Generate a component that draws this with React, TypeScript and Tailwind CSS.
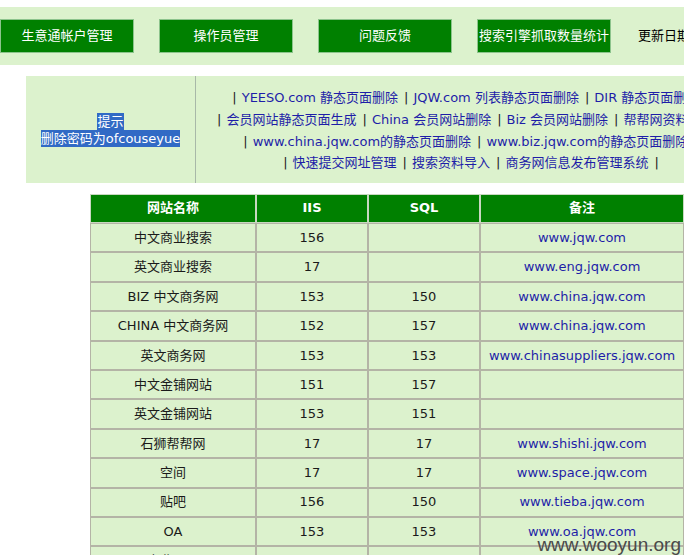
import React from "react";

const font = "font-['DejaVu_Sans','Noto_Sans_CJK_SC',sans-serif]";

type Row = { name: string; iis: string; sql: string; note: string };

const rows: Row[] = [
  { name: "中文商业搜索", iis: "156", sql: "", note: "www.jqw.com" },
  { name: "英文商业搜索", iis: "17", sql: "", note: "www.eng.jqw.com" },
  { name: "BIZ 中文商务网", iis: "153", sql: "150", note: "www.china.jqw.com" },
  { name: "CHINA 中文商务网", iis: "152", sql: "157", note: "www.china.jqw.com" },
  { name: "英文商务网", iis: "153", sql: "153", note: "www.chinasuppliers.jqw.com" },
  { name: "中文金铺网站", iis: "151", sql: "157", note: "" },
  { name: "英文金铺网站", iis: "153", sql: "151", note: "" },
  { name: "石狮帮帮网", iis: "17", sql: "17", note: "www.shishi.jqw.com" },
  { name: "空间", iis: "17", sql: "17", note: "www.space.jqw.com" },
  { name: "贴吧", iis: "156", sql: "150", note: "www.tieba.jqw.com" },
  { name: "OA", iis: "153", sql: "153", note: "www.oa.jqw.com" },
  { name: "商业目录", iis: "", sql: "", note: "" },
];

const links: string[][] = [
  ["YEESO.com 静态页面删除", "JQW.com 列表静态页面删除", "DIR 静态页面删除"],
  ["会员网站静态页面生成", "China 会员网站删除", "Biz 会员网站删除", "帮帮网资料删除"],
  ["www.china.jqw.com的静态页面删除", "www.biz.jqw.com的静态页面删除"],
  ["快速提交网址管理", "搜索资料导入", "商务网信息发布管理系统"],
];

const navButtons = ["生意通帐户管理", "操作员管理", "问题反馈", "搜索引擎抓取数量统计"];

function LinkLine({ items }: { items: string[] }) {
  return (
    <div className="whitespace-nowrap leading-[21.7px]">
      {items.map((t, i) => (
        <span key={i}>
          <span className="text-[#222] pr-[5px]">|</span>
          <a className="text-[#1e1ea8]">{t}</a>
          <span className="pr-[6px]" />
        </span>
      ))}
      <span className="text-[#222]">|</span>
    </div>
  );
}

export default function App() {
  return (
    <div className={`relative w-[684px] h-[555px] overflow-hidden bg-white text-[13px] ${font}`}>
      {/* top nav band */}
      <div className="mt-[7px] h-[58px] bg-[#dcf2cd] flex items-center gap-[25px] whitespace-nowrap">
        {navButtons.map((b) => (
          <div
            key={b}
            className="shrink-0 w-[134px] h-[34px] bg-[#008000] border border-[#8cc48c] text-white flex items-center justify-center"
          >
            {b}
          </div>
        ))}
        <div className="shrink-0 ml-[2px] text-black">更新日期：2010-10-20</div>
      </div>

      {/* hint + links */}
      <div className="mt-[11px] ml-[26px] h-[107px] w-[760px] bg-[#dcf2cd] flex">
        <div className="w-[169px] shrink-0 flex flex-col items-center justify-center leading-[17px]">
          <span className="bg-[#316ac5] text-white">提示 </span>
          <span className="bg-[#316ac5] text-white">删除密码为ofcouseyue</span>
        </div>
        <div className="w-px bg-[#a8b8a8]" />
        <div className="w-[550px] shrink-0 flex flex-col items-center justify-center pt-[2px]">
          {links.map((l, i) => (
            <LinkLine key={i} items={l} />
          ))}
        </div>
      </div>

      {/* stats table */}
      <table className="mt-[11px] ml-[90px] w-[594px] border-separate border-spacing-0 table-fixed">
        <colgroup>
          <col className="w-[166px]" />
          <col className="w-[112px]" />
          <col className="w-[112px]" />
          <col />
        </colgroup>
        <thead>
          <tr className="bg-[#008000] text-white">
            {["网站名称", "IIS", "SQL", "备注"].map((h) => (
              <th key={h} className="h-[29px] border border-[#c8d8c0] font-bold text-center align-middle pb-[2px]">
                {h}
              </th>
            ))}
          </tr>
        </thead>
        <tbody>
          {rows.map((r) => (
            <tr key={r.name} className="bg-[#dcf2cd] text-[#1a1a1a]">
              <td className="h-[29.4px] border border-[#b4b4a6] text-center">{r.name}</td>
              <td className="border border-[#b4b4a6] text-center">{r.iis}</td>
              <td className="border border-[#b4b4a6] text-center">{r.sql}</td>
              <td className="border border-[#b4b4a6] text-center text-[#1e1ea8]">{r.note}</td>
            </tr>
          ))}
        </tbody>
      </table>

      {/* watermark */}
      <div className="absolute right-[3px] bottom-[1px] text-[19px] leading-none text-[#4a4a4a] font-['Liberation_Sans',sans-serif]">
        www.wooyun.org
      </div>
    </div>
  );
}
